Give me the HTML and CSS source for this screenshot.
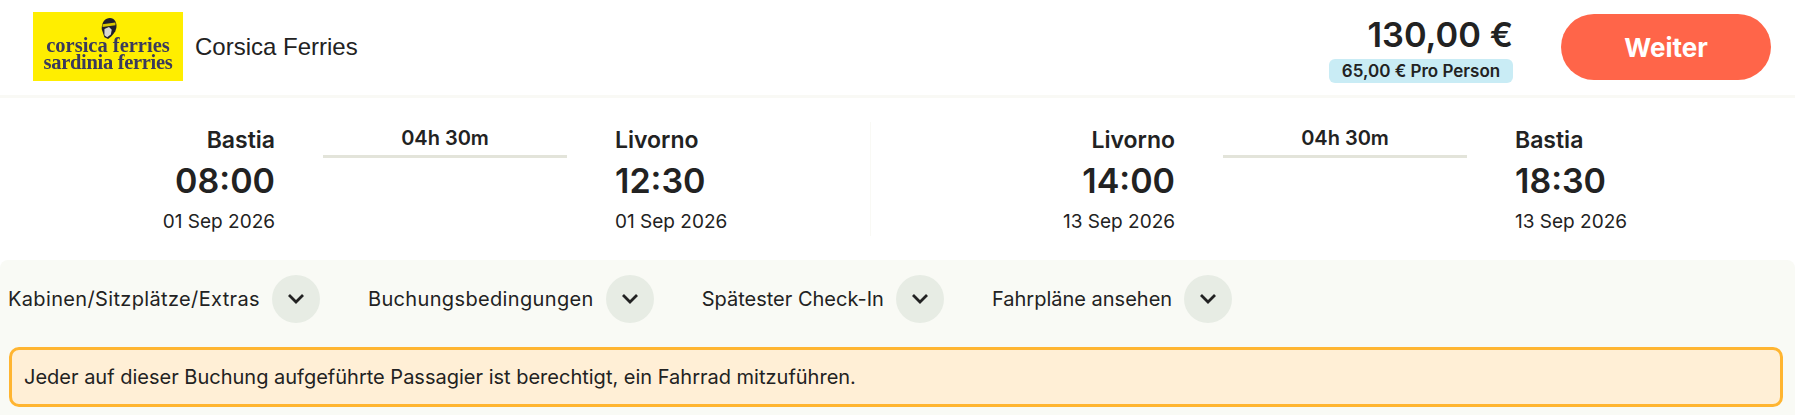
FILE: index.html
```html
<!DOCTYPE html>
<html lang="de">
<head>
<meta charset="utf-8">
<title>Corsica Ferries</title>
<link rel="stylesheet" href="styles.css">
</head>
<body>
<div class="card">
  <header class="top">
    <div class="logo">
      <svg class="logo-head" viewBox="0 0 18 24" width="18" height="22" aria-hidden="true">
        <path d="M4 22 L1 13 C1 5 5 1 10 1 C15 1 18 6 17 12 C16 17 13 20 8 24 Z" fill="#1f1f2b"/>
        <path d="M4 20 L4 13 L9 11 L12 14 L11 19 L7 22 Z" fill="#d8d8d0"/>
        <path d="M2 8 L16 6 L16 9 L2 11 Z" fill="#d9c800"/>
      </svg>
      <span class="logo-text">corsica ferries</span>
      <span class="logo-text logo-text-tight">sardinia ferries</span>
    </div>
    <span class="operator">Corsica Ferries</span>
    <div class="price">
      <div class="total">130,00 €</div>
      <div class="per">65,00 € Pro Person</div>
    </div>
    <button class="next">Weiter</button>
  </header>
  <section class="legs">
    <div class="leg">
      <div class="stop end">
        <div class="city">Bastia</div><div class="time">08:00</div><div class="date">01 Sep 2026</div>
      </div>
      <div class="dur"><div class="dur-text">04h 30m</div><div class="dur-line"></div></div>
      <div class="stop">
        <div class="city">Livorno</div><div class="time">12:30</div><div class="date">01 Sep 2026</div>
      </div>
    </div>
    <div class="leg leg2">
      <div class="stop end">
        <div class="city">Livorno</div><div class="time">14:00</div><div class="date">13 Sep 2026</div>
      </div>
      <div class="dur"><div class="dur-text">04h 30m</div><div class="dur-line"></div></div>
      <div class="stop">
        <div class="city">Bastia</div><div class="time">18:30</div><div class="date">13 Sep 2026</div>
      </div>
    </div>
  </section>
  <section class="more">
    <div class="toggles">
      <div class="toggle"><span>Kabinen/Sitzplätze/Extras</span><span class="circle"><svg viewBox="0 0 18 12" width="18" height="12"><path d="M2 2l7 7 7-7" fill="none" stroke="#222" stroke-width="2.8"/></svg></span></div>
      <div class="toggle"><span>Buchungsbedingungen</span><span class="circle"><svg viewBox="0 0 18 12" width="18" height="12"><path d="M2 2l7 7 7-7" fill="none" stroke="#222" stroke-width="2.8"/></svg></span></div>
      <div class="toggle toggle-tight"><span>Spätester Check-In</span><span class="circle"><svg viewBox="0 0 18 12" width="18" height="12"><path d="M2 2l7 7 7-7" fill="none" stroke="#222" stroke-width="2.8"/></svg></span></div>
      <div class="toggle toggle-tight"><span>Fahrpläne ansehen</span><span class="circle"><svg viewBox="0 0 18 12" width="18" height="12"><path d="M2 2l7 7 7-7" fill="none" stroke="#222" stroke-width="2.8"/></svg></span></div>
    </div>
    <div class="notice">Jeder auf dieser Buchung aufgeführte Passagier ist berechtigt, ein Fahrrad mitzuführen.</div>
  </section>
</div>
</body>
</html>
```

FILE: styles.css
```css
* { box-sizing: border-box; }
html, body { margin: 0; padding: 0; background: #fff; }
body { height: 415px; overflow: hidden; font-family: "Inter", "Liberation Sans", sans-serif; color: #222; }
.card { width: 1795px; height: 415px; display: flex; flex-direction: column; background: #fff; }
.top { height: 98px; flex: none; display: flex; align-items: flex-start; border-bottom: 3px solid #f9f9f5; padding: 12px 24px 0 33px; }
.logo { width: 150px; height: 69px; background: #ffee00; display: flex; flex-direction: column; align-items: center; position: relative; padding-top: 25px; flex: none; }
.logo-head { position: absolute; left: 67px; top: 5px; filter: blur(.4px); }
.logo-text { font-family: "Liberation Serif", serif; font-weight: 700; font-size: 20.5px; line-height: 17px; color: #3a3a5c; white-space: nowrap; filter: blur(.5px); }
.logo-text-tight { letter-spacing: -.3px; }
.operator { font-family: "Liberation Sans", sans-serif; font-size: 24px; margin-left: 12px; margin-top: 21px; color: #222; }
.price { margin-left: auto; margin-top: 4px; width: 184px; display: flex; flex-direction: column; align-items: flex-end; }
.total { font-weight: 600; font-size: 34.4px; line-height: 38px; }
.per { font-weight: 600; width: 184px; height: 24px; background: #c9ecf5; border-radius: 6px; text-align: center; font-size: 17px; line-height: 24px; margin-top: 5px; }
.next { width: 210px; height: 66px; margin: 2px 0 0 48px; border: 0; border-radius: 33px; background: #ff6549; color: #fff; font-family: "Inter", sans-serif; font-weight: 700; font-size: 26px; }
.legs { height: 162px; flex: none; display: flex; padding-top: 24px; }
.leg { width: 871px; height: 114px; display: flex; border-right: 1px solid #f9f9f5; }
.leg2 { width: 924px; border-right: 0; padding-left: 29px; }
.stop { width: 200px; }
.stop.end { text-align: right; width: 275px; }
.city { font-weight: 600; font-size: 23px; line-height: 28px; margin-top: 4px; }
.time { font-weight: 600; font-size: 34px; line-height: 42px; margin-top: 6px; }
.date { font-size: 19px; line-height: 24px; margin-top: 8px; }
.dur { width: 244px; margin: 0 48px; flex: none; text-align: center; }
.dur-text { font-weight: 600; font-size: 20px; line-height: 24px; margin-top: 4px; }
.dur-line { height: 3px; background: #e3e4da; margin-top: 5px; }
.more { flex: 1; background: #f9faf5; padding: 0 9px 0 8px; border-radius: 8px 8px 0 0; }
.toggles { display: flex; height: 87px; padding-top: 15px; gap: 48px; }
.toggle { display: flex; align-items: center; height: 48px; gap: 12px; font-size: 20px; letter-spacing: .35px; }
.toggle-tight { letter-spacing: 0; }
.circle { width: 48px; height: 48px; border-radius: 50%; background: #e7ece4; display: flex; align-items: center; justify-content: center; }
.notice { width: 1774px; height: 60px; margin-left: 1px; border: 3px solid #ffb531; border-radius: 10px; background: #ffefd6; padding: 0 12px; font-size: 20px; line-height: 54px; }
```
